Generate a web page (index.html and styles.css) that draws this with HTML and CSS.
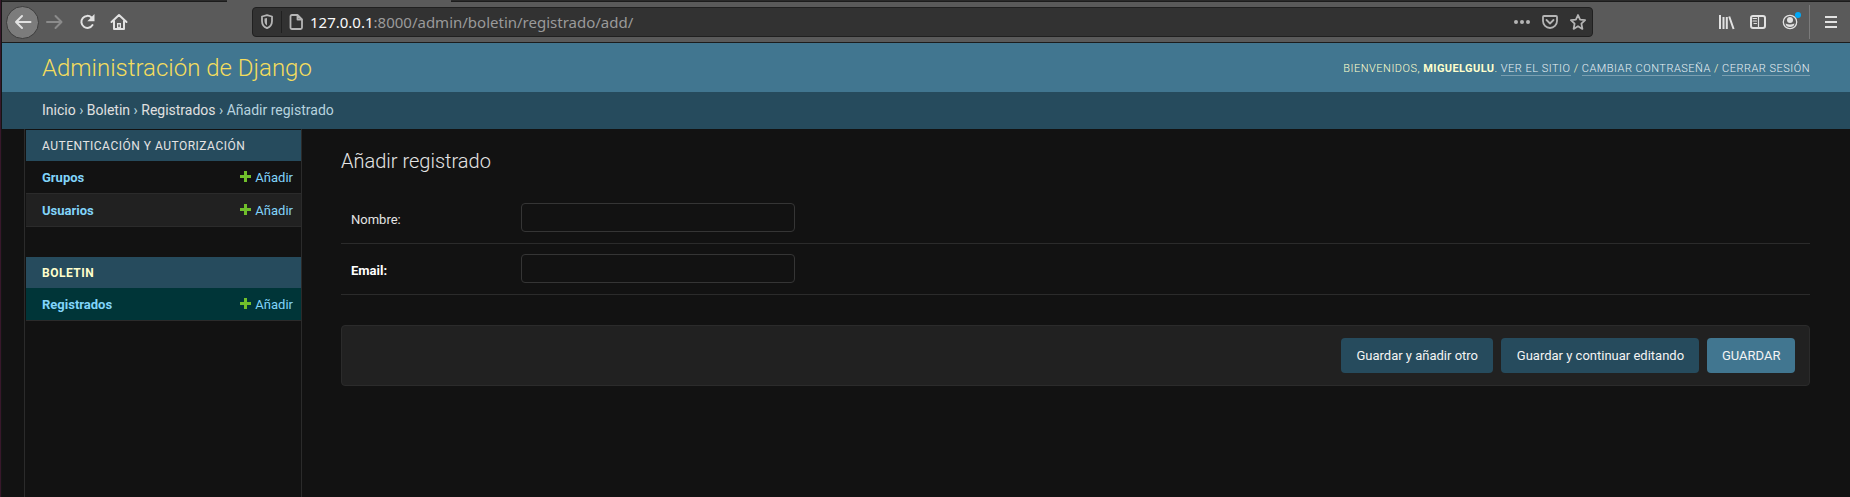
FILE: index.html
```html
<!DOCTYPE html>
<html lang="es">
<head>
<meta charset="utf-8">
<title>Añadir registrado | Administración de Django</title>
<link rel="stylesheet" href="styles.css">
</head>
<body>
<div class="window">
  <div class="tabstrip"><span class="tab-active"></span></div>
  <nav class="toolbar">
    <span class="back"><svg width="20" height="20" viewBox="0 0 20 20"><path d="M17.500 10H3M9 4L3 10L9 16"/></svg></span>
    <svg class="forward" width="20" height="20" viewBox="0 0 20 20"><path d="M2 10H16M10.500 4L16.500 10L10.500 16"/></svg>
    <svg class="reload" width="20" height="20" viewBox="0 0 20 20"><path d="M15.500 13A6 6 0 1 1 14.500 5.500"/><path d="M17.500 2V9.200H10.300Z" class="solid"/></svg>
    <svg class="home" width="20" height="20" viewBox="0 0 20 20"><path d="M2.500 10L10 3L17.500 10M5 9V17H15V9"/><path class="solid" d="M8 11H12V16H8Z"/><path class="knob" d="M10 13V14.500"/></svg>
    <div class="urlbar">
      <svg class="shield" width="16" height="18" viewBox="0 0 16 18"><path d="M8 2.200L13 3.500V8C13 11.500 11 14 8 15.200C5 14 3 11.500 3 8V3.500Z"/><path class="solid" d="M8 5V12.500C6.500 11.500 5.500 10 5.500 8V5.500Z"/></svg>
      <span class="url-divider"></span>
      <svg class="page" width="16" height="18" viewBox="0 0 16 18"><path d="M4 2H9.500L14 6.500V14.500Q14 16 12.500 16H4Q2.500 16 2.500 14.500V3.500Q2.500 2 4 2ZM9.500 2V6.500H14"/></svg>
      <span class="url"><b>127.0.0.1</b>:8000/admin/boletin/registrado/add/</span>
      <svg class="dots" width="18" height="18" viewBox="0 0 18 18"><circle cx="3" cy="9" r="2"/><circle cx="9" cy="9" r="2"/><circle cx="15" cy="9" r="2"/></svg>
      <svg class="pocket" width="18" height="18" viewBox="0 0 18 18"><path d="M3 3H15Q16 3 16 4V8A7 7 0 0 1 2 8V4Q2 3 3 3Z"/><path d="M5.500 7L9 10.500L12.500 7"/></svg>
      <svg class="star" width="18" height="18" viewBox="0 0 18 18"><path d="M9 2L11.100 6.700L16.100 7.200L12.400 10.600L13.400 15.900L9 13.200L4.600 15.900L5.600 10.600L1.900 7.200L6.900 6.700Z"/></svg>
    </div>
    <svg class="library" width="18" height="18" viewBox="0 0 18 18"><path d="M3 2V16M6.500 4V16M9.800 4V16M12.200 3.500L16.600 16"/></svg>
    <svg class="reader" width="18" height="18" viewBox="0 0 18 18"><rect x="2" y="3" width="14" height="12" rx="2"/><path class="thin" d="M9.500 3V15M4 5.500H7.500M4 8H7.500M5 10.500H7.500"/></svg>
    <span class="account"><svg width="18" height="18" viewBox="0 0 18 18"><circle class="ring" cx="9" cy="9" r="6.700"/><circle class="solid" cx="9" cy="7" r="3"/><path class="solid" d="M4.500 10.500Q9 12.500 13.500 10.500Q13 14 9 14Q5 14 4.500 10.500Z"/></svg><i class="badge"></i></span>
    <span class="separator"></span>
    <svg class="burger" width="14" height="14" viewBox="0 0 14 14"><path d="M1 2H13M1 7H13M1 12H13"/></svg>
  </nav>
  <header class="header">
    <h1>Administración de Django</h1>
    <div class="user-tools">Bienvenidos, <strong>miguelgulu</strong>. <a>Ver el sitio</a> / <a>Cambiar contraseña</a> / <a>Cerrar sesión</a></div>
  </header>
  <div class="breadcrumbs"><a>Inicio</a> › <a>Boletin</a> › <a>Registrados</a> › Añadir registrado</div>
  <div class="main">
    <aside class="sidebar">
      <section class="module">
        <h2>Autenticación y autorización</h2>
        <div class="row"><b>Grupos</b><a><svg class="plus" width="11" height="11" viewBox="0 0 11 11"><path d="M5.500 0V11M0 5.500H11"/></svg>Añadir</a></div>
        <div class="row alt"><b>Usuarios</b><a><svg class="plus" width="11" height="11" viewBox="0 0 11 11"><path d="M5.500 0V11M0 5.500H11"/></svg>Añadir</a></div>
      </section>
      <section class="module">
        <h2 class="current">Boletin</h2>
        <div class="row selected"><b>Registrados</b><a><svg class="plus" width="11" height="11" viewBox="0 0 11 11"><path d="M5.500 0V11M0 5.500H11"/></svg>Añadir</a></div>
      </section>
    </aside>
    <main class="content">
      <h2>Añadir registrado</h2>
      <div class="form-row"><label for="nombre">Nombre:</label><input id="nombre" type="text"></div>
      <div class="form-row"><label for="email" class="required">Email:</label><input id="email" type="text"></div>
      <div class="submit-row"><button>Guardar y añadir otro</button><button>Guardar y continuar editando</button><button class="default">GUARDAR</button></div>
    </main>
  </div>
</div>
</body>
</html>
```
FILE: styles.css
```css
* { box-sizing: border-box; }
body { margin: 0; background: #121212; color: #e4e4e4; font: 14px/20px Roboto, "Liberation Sans", sans-serif; overflow: hidden; }
.window { height: 497px; border-left: 1px solid #38182b; box-shadow: inset 1px 0 #151515; padding-left: 1px; display: flex; flex-direction: column; }
h1, h2 { margin: 0; font-weight: 400; }

.tabstrip { height: 2px; flex: none; background: #2a2a2a; border-bottom: 1px solid #1c1c1c; display: flex; }
.tab-active { margin-left: 225px; width: 224px; height: 2px; background: #5a5a5a; }
.toolbar { height: 41px; flex: none; background: #5a5a5a; border-bottom: 1px solid #1c1c1c; display: flex; align-items: center; position: relative; }
svg { flex: none; display: block; fill: none; stroke: #e2e2e2; stroke-width: 2; stroke-linecap: round; stroke-linejoin: round; }
svg .solid { fill: #e2e2e2; stroke: none; }
.back { width: 33px; height: 33px; margin-left: 4px; border: 1px solid #3d3d3d; border-radius: 50%; background: #7c7c7c; display: grid; place-items: center; }
.forward { margin-left: 6px; stroke: #8b8b8b; }
.reload { margin-left: 12px; }
.home { margin-left: 12px; }
.home .knob { stroke: #5a5a5a; stroke-width: 1.500; }
.urlbar { width: 1341px; height: 30px; margin-left: 123px; padding: 0 5px 0 6px; background: #323232; border: 1px solid #202020; border-radius: 4px; display: flex; align-items: center; }
.urlbar svg { stroke: #b5b5b5; stroke-width: 1.800; }
.urlbar .shield .solid, .urlbar .dots { fill: #b5b5b5; stroke: none; }
.url-divider { width: 1px; height: 22px; background: #202020; margin: 0 6px 0 6px; }
.url { margin-left: 6px; font: 15px/20px "Noto Sans", sans-serif; color: #9a9a9a; flex: 1; white-space: nowrap; }
.url b { font-weight: 400; color: #f9f9fa; }
.pocket { margin-left: 10px; }
.star { margin-left: 10px; }
.library { margin-left: 124px; stroke-linecap: butt; }
.reader { margin-left: 14px; }
.reader .thin { stroke-width: 1.200; }
.account { margin-left: 14px; position: relative; }
.account .ring { stroke-width: 1.300; }
.badge { position: absolute; right: -2px; top: -1px; width: 6px; height: 6px; border-radius: 50%; background: #00a9f8; }
.separator { width: 1px; height: 34px; margin-left: 10px; background: #7b7b7b; }
.burger { margin-left: 14px; stroke-linecap: butt; }

.header { height: 49px; flex: none; padding: 0 40px; background: #417690; display: flex; align-items: center; justify-content: space-between; }
.header h1 { font-size: 24px; font-weight: 300; line-height: 28px; color: #f5dd5d; }
.user-tools { padding-top: 2px; font-size: 11px; font-weight: 300; letter-spacing: .5px; text-transform: uppercase; color: #ffc; line-height: 14px; }
.user-tools strong { font-weight: 700; letter-spacing: .4px; }
.user-tools a { color: #e8f0f4; border-bottom: 1px solid #7a9fb1; }
.breadcrumbs { height: 37px; flex: none; padding: 8px 40px; background: #264b5d; color: #b7d3df; }
.breadcrumbs a { color: #e0e0e0; }

.main { flex: 1; display: flex; min-height: 0; }
.sidebar { width: 278px; margin-left: 22px; padding: 1px 0 0 1px; border: 1px solid #2b2b2b; border-width: 0 1px; font-size: 13px; }
.module { margin-bottom: 30px; }
.module h2 { height: 31px; padding: 1px 16px 0; background: #264b5d; font-size: 12px; line-height: 31px; letter-spacing: .5px; text-transform: uppercase; color: #e4e4e4; }
.module .current { font-weight: 700; color: #ffc; }
.row { height: 33px; padding: 2px 8px 0 16px; border-bottom: 1px solid #2b2b2b; display: flex; align-items: center; justify-content: space-between; color: #81d4fa; }
.row a { display: flex; align-items: center; gap: 4px; }
.row .plus { stroke: #70bf2b; stroke-width: 3; stroke-linecap: butt; margin-top: -3px; }
.alt { background: #212121; }
.selected { background: #003538; }
.content { flex: 1; padding: 20px 40px 0 39px; }
.content h2 { height: 44px; font-size: 20px; font-weight: 300; line-height: 24px; }
.form-row { height: 51px; border-bottom: 1px solid #2b2b2b; padding: 10px; display: flex; font-size: 13px; }
.form-row label { width: 170px; padding-top: 8px; line-height: 18px; }
.required { font-weight: 700; color: #fff; }
.form-row input { width: 274px; height: 29px; border: 1px solid #353535; border-radius: 4px; background: #121212; color: #eee; }
.submit-row { height: 61px; margin-top: 30px; padding: 12px 14px; display: flex; justify-content: flex-end; gap: 8px; background: #212121; border: 1px solid #2b2b2b; border-radius: 4px; }
button { height: 35px; padding: 0 15.400px; border: 0; border-radius: 4px; background: #264b5d; color: #f4f4f4; font: 13px Roboto, sans-serif; }
.default { padding: 0 14.500px; background: #417690; }
```
